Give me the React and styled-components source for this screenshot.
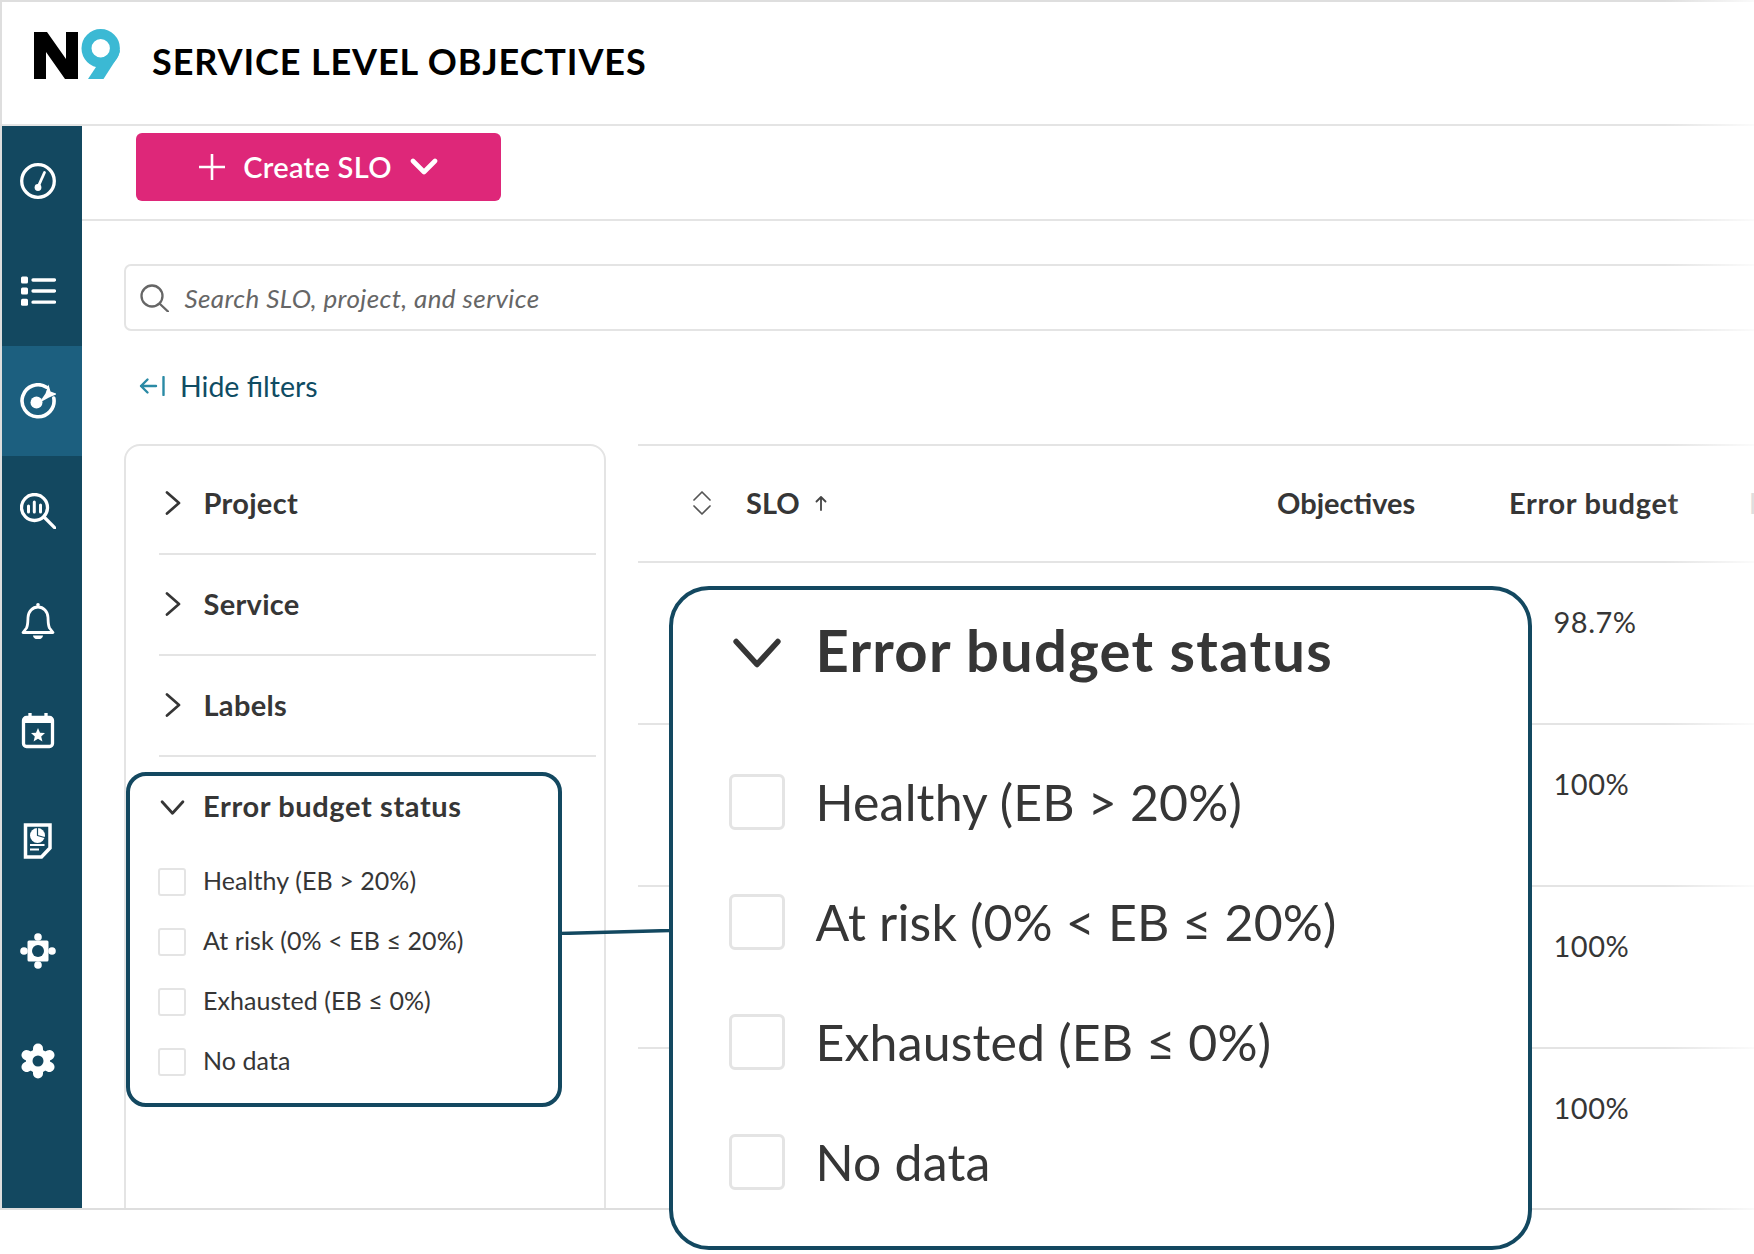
import React from "react";
import styled, { createGlobalStyle } from "styled-components";

const GlobalStyle = createGlobalStyle`
  html, body {
    margin: 0;
    background: #fff;
  }
  * {
    box-sizing: border-box;
  }
`;

const NAVY = "#134860";
const LINE = "#e4e4e4";
const INK = "#363636";

const filters = ["Project", "Service", "Labels"];
const statuses = ["Healthy (EB > 20%)", "At risk (0% < EB ≤ 20%)", "Exhausted (EB ≤ 0%)", "No data"];
const budgets = ["98.7%", "100%", "100%", "100%"];

const Logo = () => (
  <LogoSvg viewBox="0 0 86 50">
    <path d="M0 3h13l19 27V3h12v47H31L12 23v27H0z" fill="#000" />
    <circle cx="66.7" cy="19.3" r="21" fill="#fff" />
    <circle cx="66.7" cy="19.3" r="14.200" fill="none" stroke="#3bb9d4" strokeWidth="10" />
    <path d="M86 21c-.4 3-1.600 5.600-3 8L69.500 50H54l14-21z" fill="#3bb9d4" />
  </LogoSvg>
);

const NavIcon = ({ children }) => (
  <svg width="36" height="36" viewBox="0 0 36 36" fill="none" stroke="#fff" strokeWidth="3.300" strokeLinecap="round" strokeLinejoin="round">
    {children}
  </svg>
);

const navItems = [
  <>
    <circle cx="18" cy="18" r="16.300" />
    <circle cx="18" cy="24.500" r="3.400" fill="#fff" stroke="none" />
    <path d="M18 24l6.500-14.500" strokeWidth="2.800" />
  </>,
  <>
    <rect x="1" y="3.600" width="7" height="7" rx="1.500" fill="#fff" stroke="none" />
    <rect x="1" y="14.600" width="7" height="7" rx="1.500" fill="#fff" stroke="none" />
    <rect x="1" y="25.800" width="7" height="7" rx="1.500" fill="#fff" stroke="none" />
    <path d="M13 7h21.500M13 18h21.500M13 29.200h21.500" />
  </>,
  <>
    <path d="M26.500 4.200A16 16 0 1 0 33.800 15" strokeWidth="3.600" />
    <circle cx="16.500" cy="19.500" r="6" fill="#fff" stroke="none" />
    <path d="M28.500 1.500l2 7 6.500 2.500-8 3.500-10 5.500 6.500-9.500z" fill="#fff" stroke="none" />
  </>,
  <>
    <circle cx="14.500" cy="14.500" r="13" />
    <path d="M24 24l11 11" />
    <path d="M8.500 13v6M14.300 9v10M20.500 12v7" strokeWidth="3" />
  </>,
  <>
    <path d="M3 29.500l3.500-4.500C8 22 7.800 18 8 14.500 8.300 8.500 12.500 4 18 4s9.700 4.500 10 10.500c.2 3.500 0 7.500 1.500 10.500l3.500 4.500z" strokeWidth="2.800" />
    <circle cx="18" cy="1.800" r="1.800" fill="#fff" stroke="none" />
    <path d="M13 32.500h10a5 4 0 0 1-10 0z" fill="#fff" stroke="none" />
  </>,
  <>
    <rect x="3.500" y="4.500" width="29" height="29" rx="3" />
    <path d="M3.500 7.500h29" strokeWidth="5" strokeLinecap="butt" />
    <path d="M10 0v5M26 0v5" />
    <path d="M18 15l2 4.700 5 .4-3.800 3.300 1.200 5-4.400-2.700-4.400 2.700 1.200-5-3.800-3.300 5-.4z" fill="#fff" stroke="none" />
  </>,
  <>
    <path d="M5.500 2H30v23l-8.500 9H5.500z" strokeWidth="3.500" strokeLinejoin="miter" />
    <circle cx="17.500" cy="12.500" r="7.500" fill="#fff" stroke="none" />
    <path d="M17.500 12.500V5M17.500 12.500l7 2" stroke={NAVY} strokeWidth="1.200" />
    <path d="M10 22h14.500M10 26.500h9" strokeWidth="2" strokeLinecap="butt" />
  </>,
  <>
    <rect x="7.500" y="7.500" width="21" height="21" rx="1.500" fill="#fff" stroke="none" />
    <circle cx="18" cy="4" r="3.800" fill="#fff" stroke="none" />
    <circle cx="18" cy="32" r="3.800" fill="#fff" stroke="none" />
    <circle cx="4" cy="18" r="3.800" fill="#fff" stroke="none" />
    <circle cx="32" cy="18" r="3.800" fill="#fff" stroke="none" />
    <circle cx="18" cy="18" r="6" fill={NAVY} stroke="none" />
  </>,
  <>
    <g strokeWidth="10">
      <path d="M18 5.500v25" />
      <path d="M6.500 12l23 12" />
      <path d="M6.500 24l23-12" />
    </g>
    <circle cx="18" cy="18" r="12" fill="#fff" stroke="none" />
    <circle cx="18" cy="18" r="5.500" fill={NAVY} stroke="none" />
  </>,
];

const Chevron = ({ $open, size = 24 }) => (
  <svg width={size} height={size} viewBox="0 0 24 24" fill="none" stroke={INK} strokeWidth="2.700" strokeLinecap="round" strokeLinejoin="round">
    {$open ? <path d="M2 6.500l10 11 10-11" /> : <path d="M6 1.500L18 12 6 22.500" />}
  </svg>
);

const StatusGroup = ({ $k }) => (
  <StatusBox $k={$k}>
    <StatusHead $k={$k}>
      <ChevronSlot $k={$k}>
        <Chevron $open size={25 * $k} />
      </ChevronSlot>
      <HeadLabel $k={$k}>Error budget status</HeadLabel>
    </StatusHead>
    {statuses.map((s) => (
      <StatusRow $k={$k} key={s}>
        <CheckBox $k={$k} />
        <RowLabel $k={$k}>{s}</RowLabel>
      </StatusRow>
    ))}
  </StatusBox>
);

const App = () => {
  return (
    <Page>
      <GlobalStyle />
      <Shell>
        <Header>
          <Logo />
          <Title>SERVICE LEVEL OBJECTIVES</Title>
        </Header>
        <Body>
          <Sidebar>
            {navItems.map((icon, i) => (
              <NavItem key={i} $active={i === 2}>
                <NavIcon>{icon}</NavIcon>
              </NavItem>
            ))}
          </Sidebar>
          <Main>
            <Toolbar>
              <CreateButton>
                <svg width="26" height="26" viewBox="0 0 26 26" stroke="#fff" strokeWidth="2.600">
                  <path d="M13 0v26M0 13h26" />
                </svg>
                <ButtonLabel>Create SLO</ButtonLabel>
                <svg width="28" height="18" viewBox="0 0 28 18" fill="none" stroke="#fff" strokeWidth="4.600" strokeLinecap="round" strokeLinejoin="round">
                  <path d="M3 3l11 11L25 3" />
                </svg>
              </CreateButton>
            </Toolbar>
            <SearchBox>
              <svg width="29" height="28" viewBox="0 0 29 28" fill="none" stroke="#666" strokeWidth="2.300" strokeLinecap="round">
                <circle cx="12" cy="12" r="10.500" />
                <path d="M20 20l8 7.500" />
              </svg>
              <SearchText>Search SLO, project, and service</SearchText>
            </SearchBox>
            <HideFilters>
              <svg width="26" height="20" viewBox="0 0 26 20" fill="none" stroke="#2a8aa5" strokeWidth="2.400" strokeLinecap="round" strokeLinejoin="round">
                <path d="M24.500 1v18" />
                <path d="M17 10H2M8.500 3.500L2 10l6.500 6.500" />
              </svg>
              Hide filters
            </HideFilters>
            <Content>
              <FilterPanel>
                {filters.map((f) => (
                  <FilterRow key={f}>
                    <ChevronSlot $k={1}>
                      <Chevron />
                    </ChevronSlot>
                    {f}
                  </FilterRow>
                ))}
                <StatusGroup $k={1} />
              </FilterPanel>
              <Table>
                <TableHead>
                  <SortCell>
                    <svg width="20" height="26" viewBox="0 0 20 26" fill="none" stroke="#555" strokeWidth="1.700" strokeLinecap="round" strokeLinejoin="round">
                      <path d="M2 10l8-8 8 8M2 16l8 8 8-8" />
                    </svg>
                  </SortCell>
                  <HeadCell>
                    SLO
                    <svg width="14" height="16" viewBox="0 0 14 16" fill="none" stroke="#444" strokeWidth="1.800" strokeLinecap="round" strokeLinejoin="round">
                      <path d="M7 15V2M2.500 6.500L7 2l4.500 4.500" />
                    </svg>
                  </HeadCell>
                  <HeadCell>Objectives</HeadCell>
                  <HeadCell $track={0.66}>Error budget</HeadCell>
                  <HeadCell>Replay</HeadCell>
                </TableHead>
                {budgets.map((b, i) => (
                  <TableRow key={i}>
                    <BudgetCell>{b}</BudgetCell>
                  </TableRow>
                ))}
              </Table>
            </Content>
          </Main>
        </Body>
      </Shell>
      <RightFade />
      <Connector width="110" height="6" viewBox="0 0 110 6">
        <path d="M0 4.500L110 1.500" stroke={NAVY} strokeWidth="3.500" />
      </Connector>
      <ZoomCard>
        <StatusGroup $k={2} />
      </ZoomCard>
    </Page>
  );
};

export default App;

const Page = styled.div`
  position: relative;
  width: 1754px;
  height: 1254px;
  overflow: hidden;
  background: #fff;
  font-family: "Lato", "Liberation Sans", sans-serif;
  color: ${INK};
`;

const Shell = styled.div`
  height: 1210px;
  display: flex;
  flex-direction: column;
  border-top: 2px solid #dedede;
  border-left: 2px solid #dedede;
  border-bottom: 2px solid #dedede;
`;

const Header = styled.header`
  height: 124px;
  flex: none;
  display: flex;
  align-items: flex-start;
  border-bottom: 2px solid ${LINE};
`;

const LogoSvg = styled.svg`
  width: 86px;
  height: 50px;
  margin: 27px 0 0 32px;
  flex: none;
`;

const Title = styled.h1`
  margin: 37px 0 0 32px;
  font-size: 36px;
  line-height: 44px;
  font-weight: 700;
  letter-spacing: 0.9px;
  color: #000;
  white-space: nowrap;
`;

const Body = styled.div`
  flex: 1;
  min-height: 0;
  display: flex;
`;

const Sidebar = styled.nav`
  width: 80px;
  flex: none;
  background: ${NAVY};
`;

const NavItem = styled.div`
  height: 110px;
  display: flex;
  align-items: center;
  justify-content: center;
  padding-right: 8px;
  background: ${(p) => (p.$active ? "#1c5f7f" : "transparent")};
`;

const Main = styled.main`
  flex: 1;
  min-width: 0;
  overflow: hidden;
`;

const Toolbar = styled.div`
  height: 95px;
  padding: 7px 0 0 54px;
  border-bottom: 2px solid ${LINE};
`;

const CreateButton = styled.button`
  width: 365px;
  height: 68px;
  display: flex;
  align-items: center;
  justify-content: center;
  gap: 18px;
  border: none;
  border-radius: 6px;
  background: #de2779;
  color: #fff;
  font-family: inherit;
  font-size: 29px;
  font-weight: 600;
  letter-spacing: 0.3px;
`;

const ButtonLabel = styled.span`
  padding-bottom: 2px;
`;

const SearchBox = styled.div`
  width: 1700px;
  height: 67px;
  margin: 43px 0 0 41.5px;
  padding-left: 14px;
  display: flex;
  align-items: center;
  gap: 16px;
  border: 2px solid ${LINE};
  border-radius: 7px;
`;

const SearchText = styled.span`
  font-size: 26px;
  font-style: italic;
  letter-spacing: 0.4px;
  color: #666;
`;

const HideFilters = styled.div`
  height: 40px;
  margin: 35px 0 0 57px;
  display: flex;
  align-items: center;
  gap: 15px;
  font-size: 28.500px;
  color: #0f4c63;
`;

const Content = styled.div`
  margin: 38px 0 0 41.500px;
  display: flex;
  align-items: flex-start;
  gap: 32.500px;
`;

const FilterPanel = styled.aside`
  width: 482px;
  height: 780px;
  flex: none;
  padding-top: 8px;
  border: 2px solid ${LINE};
  border-radius: 16px 16px 0 0;
`;

const FilterRow = styled.div`
  height: 101px;
  margin: 0 7.500px 0 33px;
  padding-bottom: 2px;
  display: flex;
  align-items: center;
  gap: 17px;
  border-bottom: 2px solid ${LINE};
  font-size: 29px;
  font-weight: 700;
  letter-spacing: 0.3px;
`;

const ChevronSlot = styled.span`
  width: ${(p) => p.$k * 28}px;
  flex: none;
  display: flex;
  justify-content: center;
`;

const StatusBox = styled.section`
  width: ${(p) => (p.$k === 1 ? "436px" : "100%")};
  height: ${(p) => (p.$k === 1 ? "335px" : "100%")};
  margin-top: ${(p) => (p.$k === 1 ? "15px" : "0")};
  padding-left: ${(p) => (p.$k === 1 ? 28.5 : 56)}px;
  border: 4px solid ${NAVY};
  border-radius: ${(p) => p.$k * 20}px;
  background: #fff;
`;

const StatusHead = styled.div`
  height: ${(p) => p.$k * 63}px;
  margin-bottom: ${(p) => p.$k * 13}px;
  display: flex;
  align-items: center;
  gap: ${(p) => (p.$k === 1 ? 17 : 30.5)}px;
`;

const HeadLabel = styled.span`
  padding-bottom: ${(p) => (p.$k === 1 ? 4 : 7)}px;
  font-size: ${(p) => p.$k * 29}px;
  font-weight: 700;
  letter-spacing: ${(p) => p.$k * 0.62}px;
`;

const StatusRow = styled.label`
  height: ${(p) => p.$k * 60}px;
  display: flex;
  align-items: center;
  gap: ${(p) => (p.$k === 1 ? 17 : 30.5)}px;
`;

const RowLabel = styled.span`
  padding-bottom: ${(p) => (p.$k === 1 ? 4 : 0)}px;
  font-size: ${(p) => p.$k * 25}px;
  letter-spacing: ${(p) => p.$k * 0.08}px;
`;

const CheckBox = styled.span`
  width: ${(p) => p.$k * 28}px;
  height: ${(p) => p.$k * 28}px;
  flex: none;
  border: ${(p) => p.$k + 1}px solid ${LINE};
  border-radius: ${(p) => p.$k * 3}px;
`;

const Table = styled.div`
  width: 1200px;
  flex: none;
  border-top: 2px solid ${LINE};
`;

const TableHead = styled.div`
  height: 117px;
  padding-bottom: 2px;
  display: grid;
  grid-template-columns: 108px 531px 232px 240px 100px;
  align-items: center;
  border-bottom: 2px solid ${LINE};
`;

const SortCell = styled.div`
  padding-left: 54px;
  display: flex;
`;

const HeadCell = styled.div`
  display: flex;
  align-items: center;
  gap: 14px;
  font-size: 29px;
  font-weight: 700;
  letter-spacing: ${(p) => p.$track || 0}px;
  white-space: nowrap;
`;

const TableRow = styled.div`
  height: 162px;
  padding: 38.500px 0 0 915.500px;
  border-bottom: 2px solid ${LINE};
  &:last-child {
    border-bottom: none;
  }
`;

const BudgetCell = styled.div`
  font-size: 29px;
  line-height: 40px;
  letter-spacing: 0.5px;
`;

const RightFade = styled.div`
  position: absolute;
  top: 0;
  right: 0;
  width: 90px;
  height: 1212px;
  background: linear-gradient(to right, rgba(255, 255, 255, 0), rgba(255, 255, 255, 0.85));
  pointer-events: none;
`;

const Connector = styled.svg`
  position: absolute;
  left: 560px;
  top: 929px;
`;

const ZoomCard = styled.div`
  position: absolute;
  left: 669px;
  top: 586px;
  width: 863px;
  height: 664px;
`;
